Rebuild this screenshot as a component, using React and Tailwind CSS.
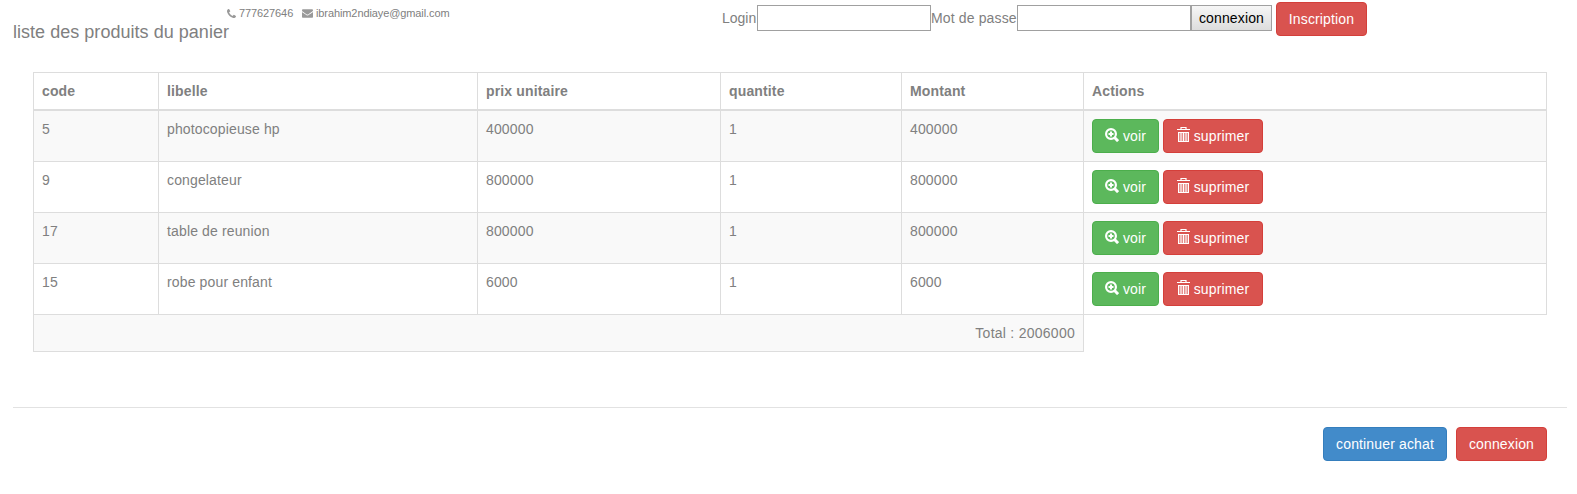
import React from "react";

const rows = [
  ["5", "photocopieuse hp", "400000", "1", "400000"],
  ["9", "congelateur", "800000", "1", "800000"],
  ["17", "table de reunion", "800000", "1", "800000"],
  ["15", "robe pour enfant", "6000", "1", "6000"],
];
const headers = ["code", "libelle", "prix unitaire", "quantite", "Montant", "Actions"];

const colors = {
  green: "bg-[#5cb85c] border-[#4cae4c]",
  red: "bg-[#d9534f] border-[#d43f3a]",
  blue: "bg-[#428bca] border-[#357ebd]",
};

function Btn({ color, className = "", children }) {
  return (
    <button className={`h-[34px] shrink-0 rounded border text-sm leading-5 tracking-[0.14px] text-white whitespace-nowrap flex items-center justify-center ${colors[color]} ${className}`}>
      {children}
    </button>
  );
}

function ZoomIcon() {
  return (
    <svg className="h-[14px] w-[14px] mr-1 -mt-0.5" viewBox="0 0 14 14" fill="none" stroke="currentColor">
      <circle cx="6" cy="6" r="4.9" strokeWidth="2.2" />
      <path d="M3.5 6h5M6 3.5v5" strokeWidth="2" />
      <path d="M9.3 9.3l3.8 3.8" strokeWidth="3" />
    </svg>
  );
}

function TrashIcon() {
  return (
    <svg className="h-[16px] w-[13px] mr-1 -mt-0.5" viewBox="0 0 13 16" fill="none" stroke="currentColor">
      <path d="M0 2.5h13M4 2V.5h5V2" strokeWidth="1.2" />
      <rect x="1" y="5" width="11" height="10" fill="currentColor" fillOpacity="0.35" stroke="none" />
      <path d="M1 5.5h11M1 14.5h11" />
      <path d="M1.5 5v10M11.5 5v10M4 5v10M6.5 5v10M9 5v10" />
    </svg>
  );
}

function PhoneIcon() {
  return (
    <svg className="h-[9px] w-[9px]" viewBox="0 0 1408 1408" fill="#999">
      <path d="M1408 1112q0 27-10 70.500t-21 68.500q-21 50-122 106-94 51-186 51-27 0-53-3.500t-57.500-12.500-47-14.500-55.500-20.500-49-18q-98-35-175-83-127-79-264-216t-216-264q-48-77-83-175-3-9-18-49t-20.500-55.500-14.500-47-12.500-57.500-3.500-53q0-92 51-186 56-101 106-122 25-11 68.500-21t70.500-10q14 0 21 3 18 6 53 76 11 19 30 54t35 63.500 31 53.500q3 4 17.500 25t21.500 35.500 7 28.500q0 20-28.500 50t-62 55-62 53-28.500 46q0 9 5 22.500t8.500 20.500 14 24 11.500 19q76 137 174 235t235 174q2 1 19 11.500t24 14 20.500 8.500 22.500 5q18 0 46-28.500t53-62 55-62 50-28.500q14 0 28.500 7t35.500 21.500 25 17.500q25 15 53.500 31t63.500 35 54 30q70 35 76 53 3 7 3 21z" />
    </svg>
  );
}

function EnvelopeIcon() {
  return (
    <svg className="h-[9px] w-[11px]" viewBox="0 0 1792 1408" fill="#999">
      <path d="M1792 454v794q0 66-47 113t-113 47H160q-66 0-113-47T0 1248V454q44 49 101 87 362 246 497 345 57 42 92.500 65.500t94.500 48 110 24.500h2q51 0 110-24.500t94.500-48T1194 886q170-123 498-345 57-39 100-87zm0-294q0 79-49 151t-122 123q-376 261-468 325-10 7-42.500 30.500t-54 38-52 32.500-57.500 27-50 9h-2q-23 0-50-9t-57.500-27-52-32.500-54-38T639 759q-91-64-262-182.500T172 434q-62-42-117-115.500T0 182q0-78 41.500-130T160 0h1472q65 0 112.500 47t47.500 113z" />
    </svg>
  );
}

export default function App() {
  return (
    <div className="h-[494px] w-[1577px] overflow-hidden bg-white font-['Liberation_Sans',Arial,sans-serif] text-sm leading-5 tracking-[0.14px] text-[#808080]">
      <header className="flex h-[72px] items-start pl-[13px]">
        <h1 className="w-[214px] whitespace-nowrap pt-[22px] text-lg leading-5 tracking-[0.03px]">liste des produits du panier</h1>
        <div className="flex items-center pt-[6px] text-[11px] leading-[15px] tracking-[-0.1px]">
          <PhoneIcon />
          <span className="ml-[3px] w-[63px]">777627646</span>
          <EnvelopeIcon />
          <span className="ml-[3px] whitespace-nowrap">ibrahim2ndiaye@gmail.com</span>
        </div>
        <form className="ml-auto mr-[210px] flex items-start">
          <label className="w-[35px] whitespace-nowrap pt-2 tracking-normal">Login</label>
          <input className="mt-[5px] h-[26px] w-[174px] border border-[#a0a0a0]" />
          <label className="w-[86px] whitespace-nowrap pt-2">Mot de passe</label>
          <input type="password" className="mt-[5px] h-[26px] w-[174px] border border-[#a0a0a0]" />
          <button type="button" className="mt-[5px] h-[26px] w-[81px] border border-[#a0a0a0] bg-linear-to-b from-[#f6f6f6] to-[#dddddd] text-black">connexion</button>
          <Btn color="red" className="ml-1 mt-[2px] w-[91px]">Inscription</Btn>
        </form>
      </header>
      <table className="ml-[33px] w-[1514px] table-fixed border-separate border-spacing-0 text-left">
        <colgroup>
          <col className="w-[125px]" />
          <col className="w-[319px]" />
          <col className="w-[243px]" />
          <col className="w-[181px]" />
          <col className="w-[182px]" />
          <col className="w-[464px]" />
        </colgroup>
        <thead>
          <tr>
            {headers.map((h) => (
              <th key={h} className="border-b-2 border-l border-t border-[#ddd] p-2 font-bold last:border-r">{h}</th>
            ))}
          </tr>
        </thead>
        <tbody>
          {rows.map((r) => (
            <tr key={r[0]} className="odd:bg-[#f9f9f9]">
              {r.map((c, i) => (
                <td key={i} className="border-b border-l border-[#ddd] p-2 align-top">{c}</td>
              ))}
              <td className="border-b border-x border-[#ddd] p-2">
                <div className="flex gap-1">
                  <Btn color="green" className="w-[67px]"><ZoomIcon />voir</Btn>
                  <Btn color="red" className="w-[100px]"><TrashIcon />suprimer</Btn>
                </div>
              </td>
            </tr>
          ))}
          <tr>
            <td colSpan={5} className="border-b border-l border-[#ddd] bg-[#f9f9f9] p-2 text-right tracking-[0.26px]">Total : 2006000</td>
            <td className="border-l border-[#ddd]" />
          </tr>
        </tbody>
      </table>
      <footer className="ml-[13px] mr-[10px] mt-[55px] flex justify-end gap-[9px] border-t border-[#e2e2e2] pr-5 pt-[19px]">
        <Btn color="blue" className="w-[124px]">continuer achat</Btn>
        <Btn color="red" className="w-[91px]">connexion</Btn>
      </footer>
    </div>
  );
}
